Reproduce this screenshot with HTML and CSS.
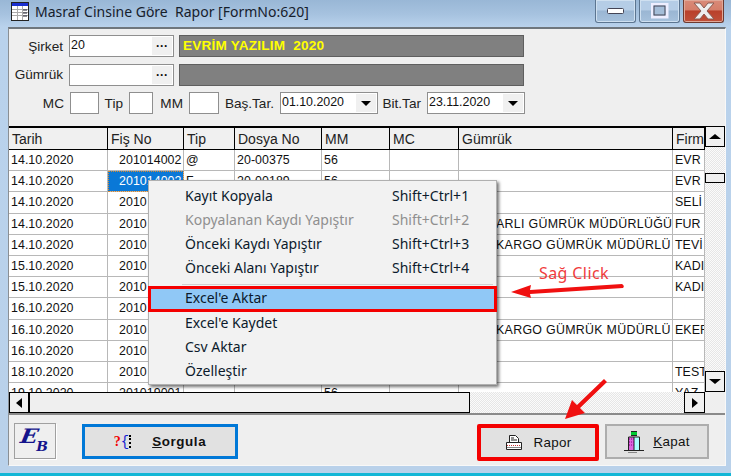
FILE: index.html
```html
<!DOCTYPE html>
<html lang="tr">
<head>
<meta charset="utf-8">
<title>Masraf Cinsine Göre Rapor</title>
<link rel="stylesheet" href="styles.css">
</head>
<body>
<div class="app">
  <header class="titlebar">
    <svg class="app-icon" width="18" height="19" viewBox="0 0 18 19">
      <rect x="0.5" y="0.5" width="17" height="18" fill="#fff" stroke="#222"/>
      <rect x="1" y="1" width="16" height="3" fill="#1a2fd0"/>
      <path d="M1 7.5H17M1 10.5H17M1 13.5H17M6.5 4V18M11.5 4V18" stroke="#aaa" fill="none"/>
      <path d="M12 8h4M12 11h4M12 14h4" stroke="#223" fill="none"/>
    </svg>
    <span class="title-text">Masraf Cinsine Göre&nbsp; Rapor [FormNo:620]</span>
    <div class="win-controls">
      <div class="win-btn">
        <svg width="18" height="8" viewBox="0 0 18 8"><rect x="0.5" y="1.5" width="16" height="5" rx="1" fill="#fff" stroke="#445"/></svg>
      </div>
      <div class="win-btn">
        <svg width="18" height="16" viewBox="0 0 18 16"><rect x="1" y="1" width="15" height="13" fill="none" stroke="#eef" stroke-width="3"/><rect x="3" y="3" width="11" height="9" fill="#a4bdd8" stroke="#445"/></svg>
      </div>
      <div class="win-btn win-close">
        <svg width="24" height="18" viewBox="0 0 24 18"><path d="M2 1H8L12 6L16 1H22L15 9L22 17H16L12 12L8 17H2L9 9Z" fill="#eee" stroke="#8a5a50"/></svg>
      </div>
    </div>
  </header>

  <main class="client">
    <section class="params">
      <div class="param-row">
        <label class="lbl lbl-wide">Şirket</label>
        <div class="input input-code"><span class="input-val">20</span><span class="dots">···</span></div>
        <div class="name-bar">EVRİM YAZILIM&nbsp; 2020</div>
      </div>
      <div class="param-row">
        <label class="lbl lbl-wide">Gümrük</label>
        <div class="input input-code"><span class="input-val"></span><span class="dots">···</span></div>
        <div class="name-bar"></div>
      </div>
      <div class="param-row">
        <label class="lbl lbl-mc">MC</label><div class="input input-mc"></div>
        <label class="lbl lbl-tip">Tip</label><div class="input input-tip"></div>
        <label class="lbl lbl-mm">MM</label><div class="input input-mm"></div>
        <label class="lbl lbl-bas">Baş.Tar.</label>
        <div class="input input-date"><span class="input-val">01.10.2020</span><span class="caret-box"><i class="caret"></i></span></div>
        <label class="lbl lbl-bit">Bit.Tar</label>
        <div class="input input-date"><span class="input-val">23.11.2020</span><span class="caret-box"><i class="caret"></i></span></div>
      </div>
    </section>

    <section class="datagrid">
      <div class="table">
        <div class="th">Tarih</div><div class="th">Fiş No</div><div class="th">Tip</div><div class="th">Dosya No</div><div class="th">MM</div><div class="th">MC</div><div class="th">Gümrük</div><div class="th">Firma</div>

        <div class="td">14.10.2020</div><div class="td num">201014002</div><div class="td">@</div><div class="td">20-00375</div><div class="td">56</div><div class="td"></div><div class="td"></div><div class="td">EVR</div>
        <div class="td">14.10.2020</div><div class="td num selected">201014002</div><div class="td">F</div><div class="td">20-00189</div><div class="td">56</div><div class="td"></div><div class="td"></div><div class="td">EVR</div>
        <div class="td">14.10.2020</div><div class="td num">2010</div><div class="td"></div><div class="td"></div><div class="td"></div><div class="td"></div><div class="td"></div><div class="td">SELİ</div>
        <div class="td">14.10.2020</div><div class="td num">2010</div><div class="td"></div><div class="td"></div><div class="td"></div><div class="td"></div><div class="td g-clip">ARLI GÜMRÜK MÜDÜRLÜĞÜ</div><div class="td">FUR</div>
        <div class="td">14.10.2020</div><div class="td num">2010</div><div class="td"></div><div class="td"></div><div class="td"></div><div class="td"></div><div class="td g-clip">KARGO GÜMRÜK MÜDÜRLÜ</div><div class="td">TEVİ</div>
        <div class="td">15.10.2020</div><div class="td num">2010</div><div class="td"></div><div class="td"></div><div class="td"></div><div class="td"></div><div class="td"></div><div class="td">KADI</div>
        <div class="td">15.10.2020</div><div class="td num">2010</div><div class="td"></div><div class="td"></div><div class="td"></div><div class="td"></div><div class="td"></div><div class="td">KADI</div>
        <div class="td">16.10.2020</div><div class="td num">2010</div><div class="td"></div><div class="td"></div><div class="td"></div><div class="td"></div><div class="td"></div><div class="td"></div>
        <div class="td">16.10.2020</div><div class="td num">2010</div><div class="td"></div><div class="td"></div><div class="td"></div><div class="td"></div><div class="td g-clip">KARGO GÜMRÜK MÜDÜRLÜ</div><div class="td">EKER</div>
        <div class="td">16.10.2020</div><div class="td num">2010</div><div class="td"></div><div class="td"></div><div class="td"></div><div class="td"></div><div class="td"></div><div class="td"></div>
        <div class="td">18.10.2020</div><div class="td num">2010</div><div class="td"></div><div class="td"></div><div class="td"></div><div class="td"></div><div class="td"></div><div class="td">TEST</div>
        <div class="td">19.10.2020</div><div class="td num">201019001</div><div class="td"></div><div class="td"></div><div class="td">56</div><div class="td"></div><div class="td"></div><div class="td">YAZ</div>
      </div>

      <div class="vbar">
        <div class="sb-btn sb-v"><i class="tri tri-up"></i></div>
        <div class="v-track"><div class="v-thumb"></div></div>
        <div class="sb-btn sb-v"><i class="tri tri-down"></i></div>
      </div>

      <div class="hbar">
        <div class="sb-btn sb-h"><i class="tri tri-left"></i></div>
        <div class="h-thumb"></div>
        <div class="h-track"></div>
        <div class="sb-btn sb-h"><i class="tri tri-right"></i></div>
      </div>
      <div class="corner"></div>
    </section>

    <footer class="footer">
      <button class="btn btn-eb"><span class="eb-e">E</span><span class="eb-b">B</span></button>
      <button class="btn btn-sorgula"><span class="q-icon"><b class="q">?</b><span class="brace">{</span><span class="dash"></span></span><span class="btn-label"><u>S</u>orgula</span></button>
      <button class="btn btn-rapor">
        <svg width="18" height="17" viewBox="0 0 18 17"><path d="M4.5 8.5V1.5H10.5L13.5 4.5V8.5" fill="#fff" stroke="#222"/><path d="M6 4H9M6 6H12" stroke="#222"/><path d="M1.5 8.5H16.5V15.5H1.5Z" fill="#fff" stroke="#222"/><path d="M2 11.5H16" stroke="#c33" stroke-dasharray="1 1"/><path d="M2 13.5H16" stroke="#888"/></svg>
        <span class="btn-text">Rapor</span>
      </button>
      <button class="btn btn-kapat">
        <svg width="20" height="22" viewBox="0 0 20 22"><rect x="7" y="1" width="6" height="3" fill="#0c3"/><path d="M7 0.5H13M7 4.5H13" stroke="#222"/><path d="M4.5 19V6H10V19" fill="#d6d"/><path d="M10 6H15.5V19H10Z" fill="#aff"/><path d="M4.5 19V6H15.5V19M10 6V19" fill="none" stroke="#222"/><path d="M5 8H10M5 11H10M5 14H10" stroke="#808" stroke-dasharray="1 1"/><path d="M0 19.5H20" stroke="#222"/><path d="M4 21.5H13" stroke="#888"/></svg>
        <span class="btn-text"><u>K</u>apat</span>
      </button>
    </footer>
  </main>

  <div class="ctx-menu">
    <div class="menu-item"><span>Kayıt Kopyala</span><span class="shortcut">Shift+Ctrl+1</span></div>
    <div class="menu-item disabled"><span>Kopyalanan Kaydı Yapıştır</span><span class="shortcut">Shift+Ctrl+2</span></div>
    <div class="menu-item"><span>Önceki Kaydı Yapıştır</span><span class="shortcut">Shift+Ctrl+3</span></div>
    <div class="menu-item"><span>Önceki Alanı Yapıştır</span><span class="shortcut">Shift+Ctrl+4</span></div>
    <div class="menu-sep"></div>
    <div class="menu-item active"><span>Excel'e Aktar</span></div>
    <div class="menu-item"><span>Excel'e Kaydet</span></div>
    <div class="menu-item"><span>Csv Aktar</span></div>
    <div class="menu-item"><span>Özelleştir</span></div>
  </div>

  <div class="note">Sağ Click</div>
  <svg class="arrows" width="731" height="476" viewBox="0 0 731 476">
    <path d="M511 292L531 285L530 290L622 284Q625 286 623 288L530 294L531 298Z" fill="#f01010"/>
    <path d="M565 419L572 400L577 405L604 379L607 382L580 408L585 413Z" fill="#f01010"/>
  </svg>
</div>
</body>
</html>
```

FILE: styles.css
```css
* { box-sizing: border-box; }
html, body { margin: 0; padding: 0; }
body { width: 731px; height: 476px; overflow: hidden; background: #b9d1ea; }

.app {
  position: relative;
  width: 731px;
  height: 476px;
  overflow: hidden;
  background: linear-gradient(#99b7d6 0, #a6c2df 14px, #b9d2ec 27px, #b9d1ea 100%);
  border-bottom: 3px solid #12b6d6;
  font-family: "Liberation Sans", Arial, sans-serif;
  font-size: 12.4px;
  color: #111;
}

/* Title bar */
.titlebar { height: 27px; display: flex; align-items: flex-start; padding: 2px 7px 0 11px; }
.app-icon { flex: none; }
.title-text { margin: 1px 0 0 6px; font-family: "Noto Sans", sans-serif; font-size: 14px; line-height: 18px; color: #16202c; }
.win-controls { margin: -2px 0 0 auto; display: flex; gap: 3px; }
.win-btn {
  width: 41px; height: 23px;
  display: flex; align-items: center; justify-content: center;
  border: 1px solid #5c7590; border-top: 0; border-radius: 0 0 3px 3px;
  background: linear-gradient(#b5cde6 0, #b5cde6 45%, #9ab6d3 50%, #a6c1dc 100%);
  box-shadow: inset 0 0 0 1px #cfe0f0;
}
.win-close {
  border-color: #6d3a30;
  background: linear-gradient(#d98a78 0, #d57e6a 45%, #b9402b 50%, #c05039 100%);
  box-shadow: inset 0 0 0 1px #e0a898;
}

/* Client */
.client {
  height: 439px;
  margin: 0 5px 0 8px;
  background: #efefef;
  border-top: 2px solid #6f767d;
  border-left: 1px solid #8a8f94;
  border-right: 1px solid #f8f8f8;
  border-bottom: 1px solid #f8f8f8;
}

/* Parameters */
.params { height: 97px; padding-top: 6px; display: flex; flex-direction: column; gap: 6.5px; }
.param-row { display: flex; align-items: center; height: 22px; }
.lbl { flex: none; margin-right: 6px; text-align: right; font-size: 13.6px; color: #222; }
.lbl-wide { width: 54px; }
.lbl-mc { width: 55px; }
.lbl-tip { width: 24px; }
.lbl-mm { width: 30px; }
.lbl-bas { width: 55px; }
.lbl-bit { width: 43px; }
.input {
  flex: none; height: 22px;
  display: flex; align-items: center; justify-content: space-between;
  background: #fff; border: 1px solid #8f8f8f;
  line-height: 14px;
}
.input-val { padding: 0 0 3px 1px; font-size: 12.4px; }
.input-code { width: 105px; }
.input-mc { width: 29px; }
.input-tip { width: 24px; }
.input-mm { width: 30px; }
.input-date { width: 98px; }
.dots {
  align-self: stretch; width: 20px; margin: 1px;
  display: flex; align-items: center; justify-content: center;
  background: #f0f0f0; font-weight: bold; font-size: 12px; color: #111;
}
.caret-box { align-self: stretch; width: 20px; margin: 1px; display: flex; align-items: center; justify-content: center; background: #f0f0f0; }
.caret { width: 0; height: 0; border: 5px solid transparent; border-top: 5px solid #000; border-bottom: 0; }
.name-bar {
  flex: none; width: 345px; height: 22px; margin-left: 5px; padding: 0 0 1px 3px;
  display: flex; align-items: center;
  background: #808080; border: 1px solid #5f5f5f;
  color: #ffff00; font-weight: bold; font-size: 13.6px; letter-spacing: .2px;
}

/* Grid */
.datagrid { display: grid; grid-template-columns: 696px 20px; grid-template-rows: 266px 21px; background: #efefef; }
.table {
  height: 266px; overflow: hidden; background: #fff;
  display: grid;
  grid-template-columns: 99px 76px 51px 87px 68px 69px 214px 32px;
  grid-template-rows: 23px;
  grid-auto-rows: 21.2px;
  border-top: 1px solid #000;
}
.th {
  display: flex; align-items: center; padding-left: 3px;
  background: #f0f0f0; border-right: 1px solid #000; border-bottom: 1px solid #000;
  border-top: 1px solid #000;
  font-size: 14px; color: #222; white-space: nowrap; overflow: hidden;
}
.td {
  display: flex; align-items: center; padding-left: 2px;
  border-right: 1px solid #b8b8b8; border-bottom: 1px solid #b8b8b8;
  white-space: nowrap; overflow: hidden;
  font-size: 12.4px; letter-spacing: .05px; color: #111;
}
.num { padding-left: 11px; }
.selected { background: #0a78d7; color: #fff; outline: 1px dotted #d88a30; outline-offset: -1px; }
.g-clip { padding-left: 37px; letter-spacing: .3px; }

.vbar { display: flex; flex-direction: column; grid-row: 1; grid-column: 2; }
.hbar { display: flex; grid-row: 2; grid-column: 1; }
.corner { background: #efefef; }
.sb-btn { flex: none; display: flex; align-items: center; justify-content: center; background: #f0f0f0; border: 1px solid #000; }
.sb-v { width: 20px; height: 21px; }
.sb-h { width: 21px; height: 21px; }
.hbar .sb-btn:first-child { border-right-width: 2px; }
.tri { width: 0; height: 0; border: 5px solid transparent; }
.tri-up { border-top: 0; border-bottom: 5px solid #000; border-left-width: 6px; border-right-width: 6px; }
.tri-down { border-bottom: 0; border-top: 5px solid #000; border-left-width: 6px; border-right-width: 6px; }
.tri-left { border-left: 0; border-right: 6px solid #000; }
.tri-right { border-right: 0; border-left: 6px solid #000; }
.v-track, .h-track { flex: 1; background: repeating-conic-gradient(#e6e6e6 0 25%, #fbfbfb 0 50%) 0 0 / 2px 2px; }
.v-track { padding-top: 26px; }
.v-thumb { height: 10px; background: #efefef; border: 1px solid #000; }
.h-thumb { flex: none; width: 440px; height: 21px; background: #efefef; border: 1px solid #000; border-left: 0; }

/* Footer */
.footer {
  height: 52px; padding: 9px 16px 0 5px;
  display: flex; align-items: flex-start;
  border-top: 2px solid #8a8a8a;
}
.btn {
  flex: none; padding: 0; margin: 0;
  display: flex; align-items: center; justify-content: center;
  background: #e1e1e1; border: 2px solid #adadad;
  font-family: "Liberation Sans", Arial, sans-serif; color: #111;
}
.btn-eb {
  width: 42px; height: 36px; margin-top: -1px;
  background: #efefef; border: 1px solid #a0a0a0; box-shadow: 1px 1px 0 #fff;
  font-family: "DejaVu Serif", serif; font-style: italic; font-weight: bold; color: #14148c;
}
.eb-e { font-size: 20px; line-height: 20px; margin: -10px 0 0 -1px; transform: skewX(-10deg) scaleX(1.15); }
.eb-b { font-size: 12px; line-height: 12px; margin: 12px 0 0 -1px; transform: scaleX(1.15); }
.btn-sorgula { width: 156px; height: 35px; margin-left: 26px; border: 3px solid #0078d7; }
.q-icon { display: flex; align-items: center; font-family: "Liberation Mono", monospace; font-size: 14px; line-height: 14px; }
.q { color: #f00000; font-family: "Liberation Serif", serif; }
.brace { color: #1020d0; }
.dash { width: 3px; height: 13px; border-left: 2px dotted #000; }
.btn-label { margin-left: 20px; font-weight: bold; font-size: 13.4px; letter-spacing: .6px; }
.btn-rapor { width: 122px; height: 37px; margin-left: auto; gap: 11px; border: 4px solid #f40000; border-radius: 2px; }
.btn-kapat { width: 104px; height: 35px; margin-left: 6px; gap: 9px; }
.btn-text { font-size: 13.4px; letter-spacing: .3px; }

/* Context menu */
.ctx-menu {
  position: absolute; left: 148px; top: 180px; width: 349px; height: 205px;
  padding: 4px 0 2px;
  background: #f2f2f2; border: 1px solid #b0b0b0;
  box-shadow: 2px 2px 3px rgba(0,0,0,.55);
  font-family: "Noto Sans", sans-serif; font-size: 14px; line-height: 20px; color: #0c1a2c;
}
.menu-item { height: 24px; padding: 0 0 2px 36px; display: flex; align-items: center; }
.shortcut { position: absolute; left: 243px; }
.disabled { color: #8f8f8f; }
.menu-sep { height: 5px; margin: 0 3px 0 33px; padding-top: 3px; }
.menu-sep::before { content: ""; display: block; height: 1px; background: #d0d0d0; }
.active { height: 26px; margin: 0 -1px; padding: 0 0 2px 34px; background: #90c8f6; border: 3px solid #f40000; }

/* Annotations */
.note {
  position: absolute; left: 539px; top: 262px;
  font-family: "Noto Sans", sans-serif; font-size: 16px; line-height: 22px; letter-spacing: .4px;
  color: #f03c3c;
}
.arrows { position: absolute; left: 0; top: 0; pointer-events: none; }
```
